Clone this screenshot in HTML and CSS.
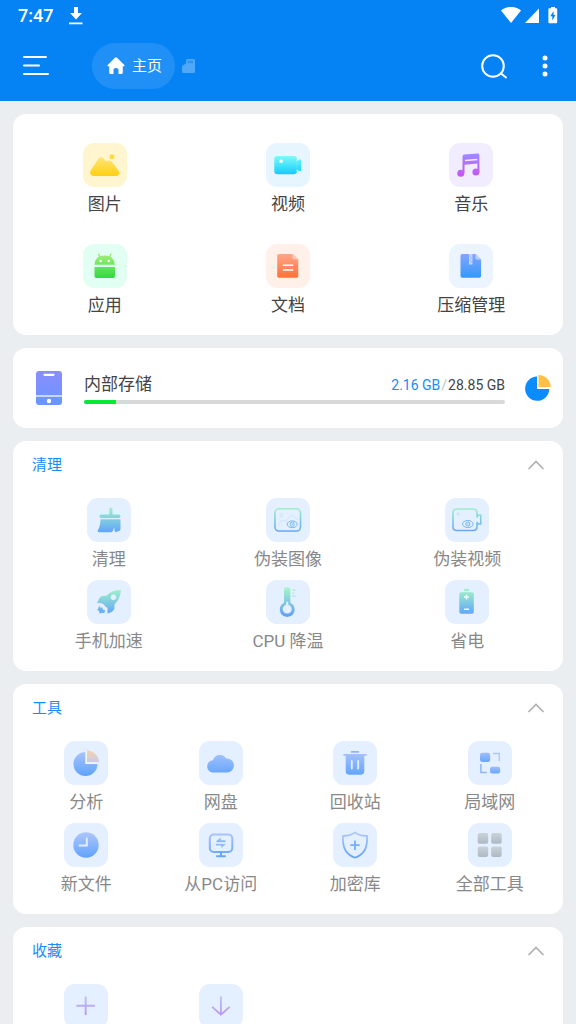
FILE: index.html
```html
<!DOCTYPE html>
<html lang="zh-CN">
<head>
<meta charset="utf-8">
<meta name="viewport" content="width=device-width, initial-scale=1">
<title>文件管理</title>
<link rel="stylesheet" href="styles.css">
</head>
<body>
<svg class="defs" aria-hidden="true">
  <defs>
    <linearGradient id="yellow" gradientUnits="userSpaceOnUse" x1="0" y1="11" x2="0" y2="33"><stop offset="0" stop-color="#ffe98a"/><stop offset="1" stop-color="#ffd011"/></linearGradient>
    <linearGradient id="cyan" gradientUnits="userSpaceOnUse" x1="0" y1="13" x2="0" y2="31"><stop offset="0" stop-color="#7dfbf6"/><stop offset="1" stop-color="#14cdff"/></linearGradient>
    <linearGradient id="purple" gradientUnits="userSpaceOnUse" x1="0" y1="10" x2="0" y2="33"><stop offset="0" stop-color="#9c8cff"/><stop offset="1" stop-color="#c955f2"/></linearGradient>
    <linearGradient id="green" gradientUnits="userSpaceOnUse" x1="0" y1="9" x2="0" y2="34"><stop offset="0" stop-color="#a9f07c"/><stop offset="1" stop-color="#2fda3c"/></linearGradient>
    <linearGradient id="orange" gradientUnits="userSpaceOnUse" x1="0" y1="10" x2="0" y2="34"><stop offset="0" stop-color="#ffa78a"/><stop offset="1" stop-color="#ff7135"/></linearGradient>
    <linearGradient id="azure" gradientUnits="userSpaceOnUse" x1="0" y1="10" x2="0" y2="34"><stop offset="0" stop-color="#84a5ff"/><stop offset="1" stop-color="#3498f8"/></linearGradient>
    <linearGradient id="teal" gradientUnits="userSpaceOnUse" x1="0" y1="8" x2="0" y2="35"><stop offset="0" stop-color="#a4f6c4"/><stop offset="1" stop-color="#5fa3fc"/></linearGradient>
    <linearGradient id="blue" gradientUnits="userSpaceOnUse" x1="0" y1="9" x2="0" y2="34"><stop offset="0" stop-color="#b0c6fc"/><stop offset="1" stop-color="#62a4fd"/></linearGradient>
    <linearGradient id="blue1" gradientUnits="userSpaceOnUse" x1="0" y1="11" x2="0" y2="21"><stop offset="0" stop-color="#a4bffb"/><stop offset="1" stop-color="#68a7fd"/></linearGradient>
    <linearGradient id="blue2" gradientUnits="userSpaceOnUse" x1="0" y1="25" x2="0" y2="33"><stop offset="0" stop-color="#a4bffb"/><stop offset="1" stop-color="#68a7fd"/></linearGradient>
    <linearGradient id="peach" gradientUnits="userSpaceOnUse" x1="0" y1="9" x2="0" y2="21"><stop offset="0" stop-color="#f9d2a8"/><stop offset="1" stop-color="#cbcbe8"/></linearGradient>
    <linearGradient id="gray" x1="0" y1="0" x2="0" y2="1"><stop offset="0" stop-color="#cbd2d9"/><stop offset="1" stop-color="#adb9c3"/></linearGradient>
    <linearGradient id="lilac" gradientUnits="userSpaceOnUse" x1="0" y1="12" x2="0" y2="31"><stop offset="0" stop-color="#b4c4fb"/><stop offset="1" stop-color="#bd94ef"/></linearGradient>
    <linearGradient id="phone" x1="0" y1="0" x2="0" y2="1"><stop offset="0" stop-color="#8b8dff"/><stop offset="1" stop-color="#6897fc"/></linearGradient>
  </defs>
</svg>

<div class="app">
  <header class="top">
    <div class="status">
      <span class="time">7:47</span>
      <svg class="download" width="14" height="18" viewBox="0 0 14 18" fill="#fff"><path d="M5 0h4v6h4l-6 6.500L1 6h4zM0 15.500h13.500v1.800H0z"/></svg>
      <div class="signals">
        <svg width="20" height="18" viewBox="0 0 20 18" fill="#fff"><path d="M0 3.500C5.500-1.200 14.500-1.200 20 3.500L10 16z"/></svg>
        <svg width="14" height="18" viewBox="0 0 14 18" fill="#fff"><path d="M14 1.500v14.600H0z"/></svg>
        <svg class="battery" width="10" height="18" viewBox="0 0 10 18"><path d="M3 0h4v1.200h1.200q1 0 1 1v13q0 1-1 1h-6.800q-1 0-1-1V2.200q0-1 1-1H3z" fill="#fff"/><path d="M5.500 4 2.300 9.300h2v4.300L7.500 8H5.500z" fill="#0583f5"/></svg>
      </div>
    </div>
    <nav class="toolbar">
      <button class="bare menu" aria-label="菜单"><svg width="28" height="22" viewBox="0 0 28 22" fill="none" stroke="#fff" stroke-width="2" stroke-linecap="round"><path d="M2 2h22M2 10.500h15M2 19h24"/></svg></button>
      <button class="tab"><svg width="18" height="18" viewBox="0 0 18 18" fill="#fff"><path d="M9 .3q.6 0 1 .4l7.300 7.300q.8 1-.3 1.300h-1.200v6.200q0 1.500-1.500 1.500h-2.800v-4.500Q11.500 11 9 11t-2.500 1.500V17H3.700q-1.500 0-1.500-1.500V9.300H1Q-.1 9 .7 8L8 .7q.4-.4 1-.4z"/></svg>主页</button>
      <button class="bare card-tab" aria-label="存储卡"><svg width="14" height="16" viewBox="0 0 14 16"><path d="M5.500 1h6Q13 1 13 2.500v11q0 1.500-1.500 1.500h-10Q0 15 0 13.500V8.500Q0 7 1.500 7L4 5.500v-3Q4 1 5.500 1z" fill="#4fa8f9"/><path d="M5.500 2.800h5.500v2.400H5.500z" fill="#2b94f7"/></svg></button>
      <button class="bare search" aria-label="搜索"><svg width="28" height="28" viewBox="0 0 28 28" fill="none" stroke="#fff" stroke-width="2" stroke-linecap="round"><circle cx="13" cy="14" r="10.800"/><path d="m21 21.500 5 4"/></svg></button>
      <button class="bare" aria-label="更多"><svg width="6" height="24" viewBox="0 0 6 24" fill="#fff"><circle cx="3" cy="4" r="2.500"/><circle cx="3" cy="12" r="2.500"/><circle cx="3" cy="20" r="2.500"/></svg></button>
    </nav>
  </header>

  <main class="content">
    <section class="card media">
      <button class="item"><span class="tile t-yellow"><svg viewBox="0 0 44 44" fill="url(#yellow)"><path d="M15.500 15.500Q18 12.500 20.700 15.500L23 18.300 25 17.700Q28 17 29.500 19.500L35.500 27.500Q38 32 33.500 33H11Q5 32.500 8 27z"/><circle cx="29" cy="13.700" r="2.500" fill="#ffda45"/></svg></span>图片</button>
      <button class="item"><span class="tile t-sky"><svg viewBox="0 0 44 44" fill="url(#cyan)"><rect x="8.300" y="13" width="22.500" height="18.300" rx="3"/><path d="M30.500 18.500 33 16.500h1.200q1 0 1 1V27q0 1-1 1H33l-2.500-2z"/><circle cx="15" cy="18.200" r="1.800" fill="#fff"/></svg></span>视频</button>
      <button class="item"><span class="tile t-purple"><svg viewBox="0 0 44 44"><path d="M13.500 13.500q0-1.800 1.800-2L28.500 10.400q1.900-.2 1.900 1.500V29.500h-2V20.500l-12.900 1.300V30h-2z" fill="url(#purple)"/><circle cx="11.800" cy="30.200" r="3.500" fill="url(#purple)"/><circle cx="26.900" cy="29" r="3.500" fill="url(#purple)"/><path d="M16 17.600 28.300 16.600" stroke="#f2edff" stroke-width="1.500"/></svg></span>音乐</button>
      <button class="item"><span class="tile t-mint"><svg viewBox="0 0 44 44"><g fill="url(#green)"><path d="M11.500 20.800Q12 11.500 21.600 11.500T31.800 20.800zM11.500 23h20.500v9q0 2-2 2H13.500q-2 0-2-2z"/></g><path d="m17 13-1.500-3M26.500 13 28 10" stroke="#9ae978" stroke-width="1.300" stroke-linecap="round"/><circle cx="17.700" cy="17" r="1.200" fill="#fff"/><circle cx="25.700" cy="17" r="1.200" fill="#fff"/></svg></span>应用</button>
      <button class="item"><span class="tile t-orange"><svg viewBox="0 0 44 44"><path d="M13 10h13.500l5.800 5.500v16.500q0 1.800-1.800 1.800H13q-1.800 0-1.800-1.800V11.800Q11.200 10 13 10z" fill="url(#orange)"/><path d="M26.500 10v4q0 1.500 1.500 1.500h4.300z" fill="#ffc5b2"/><path d="M17.300 21.200h9.400M17.300 26h9.400" stroke="#fff" stroke-width="1.400" stroke-linecap="round"/></svg></span>文档</button>
      <button class="item"><span class="tile t-azure"><svg viewBox="0 0 44 44"><path d="M13 10h13.500l5.600 5.500v16.500q0 1.800-1.800 1.800H13.300q-1.800 0-1.800-1.800V11.800Q11.500 10 13 10z" fill="url(#azure)"/><path d="M26.500 10v4q0 1.500 1.500 1.500h4.100z" fill="#b9d0ff"/><path d="M20 10h3.400v10.500H20z" fill="#c4d8ff"/><path d="M20.300 12h1.500M21.500 14h1.500M20.300 16h1.500M21.500 18h1.500" stroke="#739fff" stroke-width=".7"/></svg></span>压缩管理</button>
    </section>

    <section class="card storage">
      <svg width="26" height="34" viewBox="0 0 26 34"><rect width="26" height="34" rx="3" fill="url(#phone)"/><path d="M8.500 3.800h9" stroke="#fff" stroke-width="2.200" stroke-linecap="round"/><path d="M0 25h26" stroke="#fff" stroke-width="1.200"/><circle cx="13" cy="30" r="2.200" fill="#fff"/></svg>
      <div class="usage">
        <div class="usage-line"><label for="internal">内部存储</label><span class="size"><b>2.16 GB</b><i>/</i>28.85 GB</span></div>
        <progress id="internal" value="2.16" max="28.85"></progress>
      </div>
      <button class="bare" aria-label="存储分析"><svg width="26" height="26" viewBox="0 0 26 26"><path d="M12 1.600A12.100 12.100 0 1 0 24.300 14H12z" fill="#0a8cff"/><path d="M13.500 0A12.200 12.200 0 0 1 25.700 12H13.500z" fill="#ffc043"/></svg></button>
    </section>

    <section class="card group">
      <header class="group-head"><h2>清理</h2><button class="bare" aria-label="收起"><svg width="18" height="10" viewBox="0 0 18 10"><path d="m1.500 9 7.500-7.500L16.500 9" fill="none" stroke="#b0b0b0" stroke-width="1.700"/></svg></button></header>
      <div class="grid three">
        <button class="item"><span class="tile"><svg viewBox="0 0 44 44" fill="url(#teal)"><path d="M22.300 11q0-1.500 1.600-1.500t1.600 1.500v5.500h6.500q1.500 0 1.500 1.800T32 20H14q-1.600 0-1.600-1.700T14 16.500h8.300zM13.500 21.300H33.500V31q0 1.500-1.500 2l-3.500 1.300q-1.500-1.500-1-5.300l-2 4.500q-.5.800-1.500.8H12q-2-.5-1-2.300 2.500-4 2.500-10.700z"/></svg></span>清理</button>
        <button class="item"><span class="tile"><svg viewBox="0 0 44 44" fill="none" stroke="url(#teal)"><rect x="9" y="10.800" width="25.500" height="22.200" rx="4" stroke-width="1.600"/><g stroke="#c3e2f3" stroke-width=".8"><circle cx="15.300" cy="17" r="1.500"/><path d="M12 28q3-6 5.500-5.500l2 .8 6-6.300 2.500 1 3.500 4"/></g><ellipse cx="26.200" cy="26.300" rx="5" ry="3.400" stroke="#76b8ec"/><circle cx="26.200" cy="26.300" r="2.100" stroke="#76b8ec" stroke-width="1"/><circle cx="26.200" cy="26.300" r=".7" fill="#76b8ec" stroke="none"/></svg></span>伪装图像</button>
        <button class="item"><span class="tile"><svg viewBox="0 0 44 44" fill="none" stroke="url(#teal)"><path d="M32 19v-4q0-4-4-4H12q-4 0-4 4v13.500q0 4 4 4h16q4 0 4-4V24.500l1.500 1.500h2.300v-9h-2.300z" stroke-width="1.600" stroke-linejoin="round"/><circle cx="13.200" cy="16" r="1.200" stroke="#b9dff0" stroke-width=".8"/><ellipse cx="22.800" cy="26" rx="5.300" ry="3.500" stroke="#76b8ec"/><circle cx="22.800" cy="26" r="2.100" stroke="#76b8ec"/><circle cx="22.800" cy="26" r=".7" fill="#76b8ec" stroke="none"/></svg></span>伪装视频</button>
        <button class="item"><span class="tile"><svg viewBox="0 0 44 44" fill="url(#teal)"><path fill-rule="evenodd" d="M34 10Q25 9.500 19 16q-5-1-7 3l-2 4 4.500.3q3 .5 4 3.500l2 1v5.700q5-1 6.800-4.500l.3-4.500Q33.500 18 34 10zM26.500 14.500a2.900 2.900 0 1 0 .01 0z"/><path d="m12.200 25.500 1.300 2.200 1.800-.5.500 2.200 2.700 1.300-1.500 2.300-2.300-.3-2 1-.5-2.500-2-1.200 1-1.200z"/></svg></span>手机加速</button>
        <button class="item"><span class="tile"><svg viewBox="0 0 44 44" fill="url(#teal)"><path fill-rule="evenodd" d="M18 10.500q0-3.300 3.200-3.300t3.200 3.300v12.300A7.500 7.500 0 1 1 18 22.800zM20.100 22.500v2.200a4.500 4.500 0 1 0 2.200 0v-2.200q-1-2-2.200 0z"/><path d="M26.300 10.200h3M26.300 13.200h2M26.300 16.200h3" stroke="#a5ebd0" stroke-width="1.200"/></svg></span>CPU 降温</button>
        <button class="item"><span class="tile"><svg viewBox="0 0 44 44" fill="url(#teal)"><rect x="19" y="8.800" width="5.300" height="2.500" rx="1"/><rect x="14.300" y="12.200" width="14.500" height="21.500" rx="2"/><path d="M19 17h5M21.500 14.500v5M19 29.300h5" stroke="#eefafa" stroke-width="1.400"/></svg></span>省电</button>
      </div>
    </section>

    <section class="card group">
      <header class="group-head"><h2>工具</h2><button class="bare" aria-label="收起"><svg width="18" height="10" viewBox="0 0 18 10"><path d="m1.500 9 7.500-7.500L16.500 9" fill="none" stroke="#b0b0b0" stroke-width="1.700"/></svg></button></header>
      <div class="grid four">
        <button class="item"><span class="tile"><svg viewBox="0 0 44 44"><path d="M21.500 11A12 12 0 1 0 33.500 23H21.500z" fill="url(#blue)"/><path d="M23 9.500A12 12 0 0 1 35 21.300H23z" fill="url(#peach)"/><path d="M22.200 10v12.200H34" fill="none" stroke="#f2f8ff" stroke-width="1.300"/></svg></span>分析</button>
        <button class="item"><span class="tile"><svg viewBox="0 0 44 44"><path d="M14.500 31.500A6.100 6.100 0 0 1 14 19.300 7.200 7.200 0 0 1 27.200 17.500 7 7 0 0 1 28.500 31.500z" fill="url(#blue)"/></svg></span>网盘</button>
        <button class="item"><span class="tile"><svg viewBox="0 0 44 44"><g fill="url(#blue)"><rect x="17.700" y="10" width="8.500" height="1.800" rx=".9" fill="#8fb4fb"/><path d="M11 13h22q.8 0 .8.900t-.8.900H31.300V30q0 3.800-3.800 3.800H16.500q-3.800 0-3.800-3.800V14.800H11q-.8 0-.8-.9T11 13z"/></g><path d="M18.800 20v7.500M25.200 20v7.500" stroke="#e2efff" stroke-width="1.800" stroke-linecap="round"/></svg></span>回收站</button>
        <button class="item"><span class="tile"><svg viewBox="0 0 44 44"><rect x="12" y="11.700" width="10.200" height="9.300" rx="2.300" fill="url(#blue1)"/><rect x="22" y="25.700" width="10.200" height="6.800" rx="2.200" fill="url(#blue2)"/><path d="M25 12.500h6.300v7.800" fill="none" stroke="#aac5fa" stroke-width="1.300"/><path d="M12.900 23v8.500h6" fill="none" stroke="#8db6fb" stroke-width="1.500"/></svg></span>局域网</button>
        <button class="item"><span class="tile"><svg viewBox="0 0 44 44"><circle cx="22" cy="22" r="12.700" fill="url(#blue)"/><path d="M22.800 15.500v7h-7.300" fill="none" stroke="#e2eeff" stroke-width="2" stroke-linecap="round"/></svg></span>新文件</button>
        <button class="item"><span class="tile"><svg viewBox="0 0 44 44" fill="none" stroke="url(#blue)" stroke-width="2"><rect x="10.800" y="11.500" width="22.500" height="17.500" rx="4"/><path d="M22 29v4" stroke="#66a6fd"/><path d="M18 33.200h8" stroke="#66a6fd" stroke-linecap="round"/><path d="m17.500 18.200 4-3.200v2.500h4.700v1.400H17.500zM26.500 21.300l-4 3.200v-2.200h-5.500v-1.300z" fill="#8ab6fb" stroke="#8ab6fb" stroke-width=".4"/></svg></span>从PC访问</button>
        <button class="item"><span class="tile"><svg viewBox="0 0 44 44" fill="none" stroke="url(#blue)" stroke-width="1.700"><path d="M22 9.300Q26.500 13 34 12.800 35.300 30.500 22 34.700 8.700 30.500 10 12.800 17.500 13 22 9.300z" stroke-linejoin="round"/><path d="M17.300 22.200h9.400M22 17.500v9.400" stroke="#75aefc" stroke-width="1.800"/></svg></span>加密库</button>
        <button class="item"><span class="tile"><svg viewBox="0 0 44 44" fill="url(#gray)"><rect x="9.700" y="10" width="10.500" height="10.700" rx="1.800"/><rect x="23.200" y="10" width="10.500" height="10.700" rx="1.800"/><rect x="9.700" y="23.400" width="10.500" height="10.500" rx="1.800"/><rect x="23.200" y="23.400" width="10.500" height="10.500" rx="1.800"/></svg></span>全部工具</button>
      </div>
    </section>

    <section class="card group">
      <header class="group-head"><h2>收藏</h2><button class="bare" aria-label="收起"><svg width="18" height="10" viewBox="0 0 18 10"><path d="m1.500 9 7.500-7.500L16.500 9" fill="none" stroke="#b0b0b0" stroke-width="1.700"/></svg></button></header>
      <div class="grid four">
        <button class="item" aria-label="添加"><span class="tile"><svg viewBox="0 0 44 44" fill="url(#lilac)"><path d="M20.700 12.500h1.900v8.300h8.300v1.900h-8.300V31h-1.900v-8.300h-8.300v-1.900h8.300z"/></svg></span></button>
        <button class="item" aria-label="下载"><span class="tile"><svg viewBox="0 0 44 44" fill="none" stroke="url(#lilac)" stroke-width="1.800" stroke-linecap="round" stroke-linejoin="round"><path d="m13.700 23.300 8.200 7.400 8.200-7.400"/><path d="M21 12.500h1.800V30H21z" fill="url(#lilac)" stroke="none"/></svg></span></button>
      </div>
    </section>
  </main>
</div>
</body>
</html>
```
FILE: styles.css
```css
* {
  box-sizing: border-box;
}

body {
  margin: 0;
  background: #ebeef1;
  color: #444;
  font-family: Roboto, "Noto Sans CJK SC", sans-serif;
  font-size: 17px;
  line-height: 24px;
}

button {
  margin: 0;
  padding: 0;
  border: 0;
  background: none;
  color: inherit;
  font: inherit;
  cursor: pointer;
}

svg {
  display: block;
  flex-shrink: 0;
}

.defs {
  position: absolute;
  width: 0;
  height: 0;
}

.app {
  display: flex;
  flex-direction: column;
  height: 100vh;
}

.top {
  flex-shrink: 0;
  background: #0583f5;
  color: #fff;
}

.status {
  display: flex;
  align-items: center;
  height: 32px;
  padding: 0 18px;
  font-size: 18px;
  font-weight: 500;
}

.download {
  margin-left: 16px;
}

.signals {
  display: flex;
  gap: 4px;
  margin-left: auto;
}

.battery {
  margin-left: 5px;
}

.toolbar {
  display: flex;
  align-items: center;
  height: 69px;
  padding: 0 28px 2px 22px;
}

.menu {
  margin-right: 42px;
}

.tab {
  display: flex;
  align-items: center;
  gap: 7px;
  height: 46px;
  padding: 0 13px 0 15px;
  border-radius: 23px;
  background: #2090f6;
  font-size: 15px;
}

.card-tab {
  margin-left: 7px;
}

.search {
  margin: 0 34px 0 auto;
}

.content {
  display: flex;
  flex: 1;
  flex-direction: column;
  gap: 13px;
  min-height: 0;
  padding: 13px;
  overflow-y: auto;
  scrollbar-width: none;
}

.card {
  flex-shrink: 0;
  border-radius: 13px;
  background: #fff;
}

.media {
  display: grid;
  grid-template-columns: repeat(3, 1fr);
  row-gap: 28px;
  padding: 29px 0 18px;
}

.item {
  display: flex;
  flex-direction: column;
  align-items: center;
  gap: 5px;
  white-space: nowrap;
}

.tile {
  width: 44px;
  height: 44px;
  border-radius: 11px;
  background: #e4f0ff;
}

.t-yellow { background: #fff6cf; }
.t-sky { background: #e6f5ff; }
.t-purple { background: #f1edff; }
.t-mint { background: #e2fff4; }
.t-orange { background: #fff0e9; }
.t-azure { background: #ecf5ff; }

.storage {
  display: flex;
  align-items: center;
  min-height: 80px;
  padding: 0 12px 0 23px;
}

.usage {
  display: flex;
  flex: 1;
  flex-direction: column;
  gap: 4px;
  margin: 0 20px 0 22px;
}

.usage-line {
  display: flex;
  align-items: baseline;
  justify-content: space-between;
  height: 24px;
}

.size {
  font-size: 14px;
}

.size b {
  color: #1a8cf8;
  font-weight: 400;
}

.size i {
  margin: 0 1px;
  color: #c4c4c4;
  font-style: normal;
}

progress {
  display: block;
  width: 100%;
  height: 4px;
  border: 0;
  border-radius: 2px;
  overflow: hidden;
  appearance: none;
  background: #d9d9d9;
}

progress::-webkit-progress-bar {
  background: #d9d9d9;
}

progress::-webkit-progress-value {
  background: #06ea35;
}

progress::-moz-progress-bar {
  background: #06ea35;
}

.group {
  padding-bottom: 18px;
  color: #888;
}

.group-head {
  display: flex;
  align-items: center;
  justify-content: space-between;
  height: 48px;
  padding: 0 18px 0 19px;
}

.group-head h2 {
  margin: 0;
  color: #1a8cf8;
  font-size: 15px;
  font-weight: 400;
}

.grid {
  display: grid;
  row-gap: 9px;
  padding: 9px 6px 0;
}

.three {
  grid-template-columns: repeat(3, 1fr);
}

.four {
  grid-template-columns: repeat(4, 1fr);
}
```
